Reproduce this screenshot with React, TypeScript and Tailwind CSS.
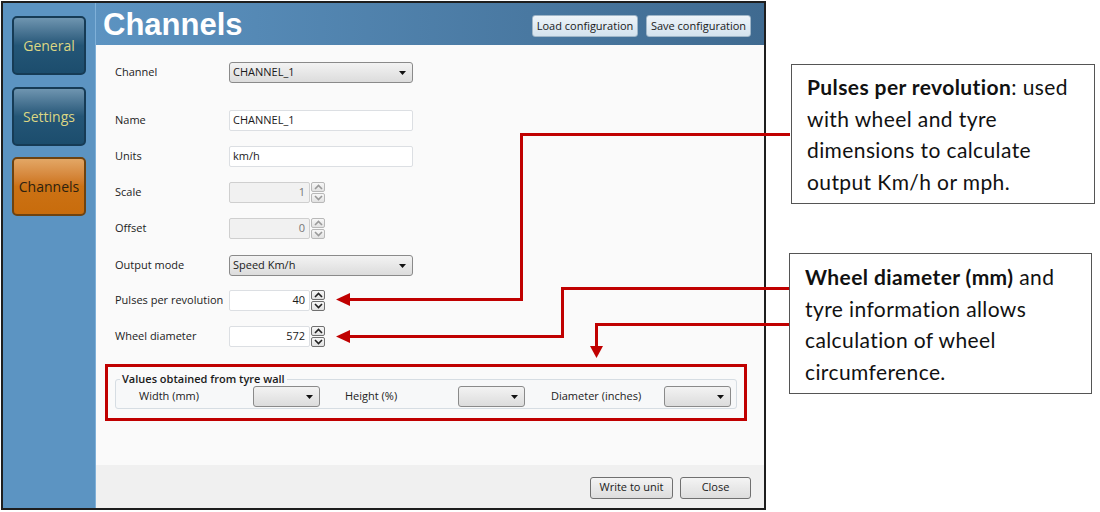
import React from "react";

const ui = { fontFamily: '"Open Sans", "Noto Sans", sans-serif' };

function Caret() {
  return (
    <svg width="7" height="4" viewBox="0 0 7 4" className="shrink-0">
      <polygon points="0,0 7,0 3.5,4" fill="#111" />
    </svg>
  );
}

function Select({ value, w }: { value?: string; w: string }) {
  return (
    <div
      className={`${w} h-[21px] flex items-center justify-between pl-[3px] pr-[6px] rounded-[3px] border border-[#8a8a8a] bg-gradient-to-b from-[#f3f3f3] to-[#dcdcdc] text-[11px] text-[#1a1a1a]`}
    >
      <span>{value ?? ""}</span>
      <Caret />
    </div>
  );
}

function Spinner({ disabled }: { disabled?: boolean }) {
  const c = disabled ? "#9a9a9a" : "#222";
  const b = disabled ? "border-[#b8b8b8]" : "border-[#707070]";
  return (
    <div className="flex flex-col ml-[1px]">
      {[0, 1].map((i) => (
        <div
          key={i}
          className={`w-[14px] h-[10px] border ${b} rounded-[2px] bg-gradient-to-b from-[#f7f7f7] to-[#e2e2e2] flex items-center justify-center ${i === 1 ? "mt-[1px]" : ""}`}
        >
          <svg width="9" height="6" viewBox="0 0 9 6">
            <polyline
              points={i === 0 ? "1,5 4.5,1.5 8,5" : "1,1 4.5,4.5 8,1"}
              fill="none"
              stroke={c}
              strokeWidth="1.6"
            />
          </svg>
        </div>
      ))}
    </div>
  );
}

function NumInput({ value, disabled }: { value: string; disabled?: boolean }) {
  return (
    <div className="flex items-center">
      <div
        className={`w-[81px] h-[21px] border rounded-[2px] flex items-center justify-end pr-[4px] text-[11px] ${
          disabled
            ? "bg-[#f1f1f1] border-[#cfcfcf] text-[#777]"
            : "bg-white border-[#dcdfe3] text-[#1a1a1a]"
        }`}
      >
        {value}
      </div>
      <Spinner disabled={disabled} />
    </div>
  );
}

function TextInput({ value }: { value: string }) {
  return (
    <div className="w-[184px] h-[21px] border border-[#dcdfe3] rounded-[2px] bg-white flex items-center pl-[3px] text-[11px] text-[#1a1a1a]">
      {value}
    </div>
  );
}

function Row({ label, children, mt }: { label: string; children: React.ReactNode; mt: string }) {
  return (
    <div className={`flex items-center h-[21px] ${mt}`}>
      <div className="w-[114px] text-[11px] text-[#222]">{label}</div>
      {children}
    </div>
  );
}

function Btn({ label, w, blue }: { label: string; w: string; blue?: boolean }) {
  return (
    <div
      className={`${w} h-[22px] flex items-center justify-center rounded-[3px] border text-[11px] text-[#1a1a1a] ${
        blue
          ? "border-[#9fb6c8] bg-gradient-to-b from-[#eef4f9] to-[#d3e2ee]"
          : "border-[#707070] bg-gradient-to-b from-[#f4f4f4] to-[#dddddd]"
      }`}
    >
      {label}
    </div>
  );
}

function SideBtn({ label, active, mt }: { label: string; active?: boolean; mt: string }) {
  return (
    <div
      className={`${mt} w-[74px] h-[59px] rounded-[5px] border-2 flex items-center justify-center text-[14px] ${
        active
          ? "border-[#6e4310] bg-gradient-to-b from-[#e3a765] via-[#cc7214] to-[#c86c0c] text-[#2d2110]"
          : "border-[#163b55] bg-gradient-to-b from-[#6f95b0] via-[#245677] to-[#1c4d6d] text-[#dcd684]"
      }`}
    >
      {label}
    </div>
  );
}

const callout = { fontFamily: 'Lato, "Open Sans", sans-serif', letterSpacing: "0.4px" };

export default function App() {
  return (
    <div className="relative w-[1100px] h-[512px] bg-white overflow-hidden" style={ui}>
      {/* Window */}
      <div className="ml-[1px] mt-[1px] w-[765px] h-[509px] border-2 border-[#1e1e1e] flex">
        {/* Sidebar */}
        <div className="w-[93px] bg-[#5c94c2] flex flex-col pl-[9px] border-r border-[#7fb0d8]">
          <SideBtn label="General" mt="mt-[13px]" />
          <SideBtn label="Settings" mt="mt-[12px]" />
          <SideBtn label="Channels" active mt="mt-[11px]" />
        </div>
        {/* Main */}
        <div className="flex-1 flex flex-col">
          <div className="h-[42px] bg-gradient-to-r from-[#5c93c1] to-[#3f6a90] flex items-start justify-between pl-[7px] pr-[13px]">
            <div
              className="text-white text-[31px] font-bold leading-none mt-[6px]"
              style={{ fontFamily: '"Liberation Sans", Arial, sans-serif' }}
            >
              Channels
            </div>
            <div className="flex gap-[8px] mt-[12px]">
              <Btn label="Load configuration" w="w-[106px]" blue />
              <Btn label="Save configuration" w="w-[105px]" blue />
            </div>
          </div>
          <div className="flex-1 bg-[#fafafa] pt-[17px] pl-[19px] flex flex-col">
            <Row label="Channel" mt="">
              <Select value="CHANNEL_1" w="w-[184px]" />
            </Row>
            <Row label="Name" mt="mt-[27px]">
              <TextInput value="CHANNEL_1" />
            </Row>
            <Row label="Units" mt="mt-[15px]">
              <TextInput value="km/h" />
            </Row>
            <Row label="Scale" mt="mt-[15px]">
              <NumInput value="1" disabled />
            </Row>
            <Row label="Offset" mt="mt-[15px]">
              <NumInput value="0" disabled />
            </Row>
            <Row label="Output mode" mt="mt-[16px]">
              <Select value="Speed Km/h" w="w-[184px]" />
            </Row>
            <Row label="Pulses per revolution" mt="mt-[14px]">
              <NumInput value="40" />
            </Row>
            <Row label="Wheel diameter" mt="mt-[15px]">
              <NumInput value="572" />
            </Row>
            <div className="mt-[17px] ml-[-10px] w-[642px] h-[57px] border-[3px] border-[#c00000] pl-[7px] pr-[7px] pt-[6px]">
              <fieldset className="border border-[#d6dde3] rounded-[3px] h-[36px] pl-[23px] pr-[4px] bg-[#f7f8f9]">
                <legend className="text-[11px] font-semibold text-[#1a1a1a] ml-[-19px] px-[2px] leading-[12px]">
                  Values obtained from tyre wall
                </legend>
                <div className="flex items-center mt-[1px]">
                  <div className="w-[114px] text-[11px] text-[#222]">Width (mm)</div>
                  <Select w="w-[67px]" />
                  <div className="w-[25px]" />
                  <div className="w-[113px] text-[11px] text-[#222]">Height (%)</div>
                  <Select w="w-[67px]" />
                  <div className="w-[26px]" />
                  <div className="w-[113px] text-[11px] text-[#222]">Diameter (inches)</div>
                  <Select w="w-[67px]" />
                </div>
              </fieldset>
            </div>
          </div>
          <div className="h-[43px] bg-[#f0f0f0] flex items-center justify-end gap-[7px] pr-[13px] pt-[2px]">
            <Btn label="Write to unit" w="w-[83px]" />
            <Btn label="Close" w="w-[71px]" />
          </div>
        </div>
      </div>

      {/* Arrows overlay */}
      <svg className="absolute left-0 top-0 pointer-events-none" width="1100" height="512">
        <polyline points="790,134.5 521.5,134.5 521.5,299.5 348,299.5" fill="none" stroke="#c00000" strokeWidth="3" />
        <polygon points="336,299.5 350,293 350,306" fill="#c00000" />
        <polyline points="790,288.5 562.5,288.5 562.5,336.5 348,336.5" fill="none" stroke="#c00000" strokeWidth="3" />
        <polygon points="336,336.5 350,330 350,343" fill="#c00000" />
        <polyline points="790,324.5 596.5,324.5 596.5,348" fill="none" stroke="#c00000" strokeWidth="3" />
        <polygon points="596.5,358 590,346 603,346" fill="#c00000" />
      </svg>

      {/* Callouts */}
      <div
        className="absolute left-[791px] top-[64px] w-[304px] h-[140px] border border-[#555] bg-white pl-[15px] pt-[6px] text-[21px] leading-[31.7px] text-[#111] whitespace-nowrap"
        style={callout}
      >
        <b>Pulses per revolution</b>: used
        <br />
        with wheel and tyre
        <br />
        dimensions to calculate
        <br />
        output Km/h or mph.
      </div>
      <div
        className="absolute left-[789px] top-[253px] w-[303px] h-[141px] border border-[#555] bg-white pl-[15px] pt-[7px] text-[21px] leading-[31.7px] text-[#111] whitespace-nowrap"
        style={callout}
      >
        <b>Wheel diameter (mm)</b> and
        <br />
        tyre information allows
        <br />
        calculation of wheel
        <br />
        circumference.
      </div>
    </div>
  );
}
